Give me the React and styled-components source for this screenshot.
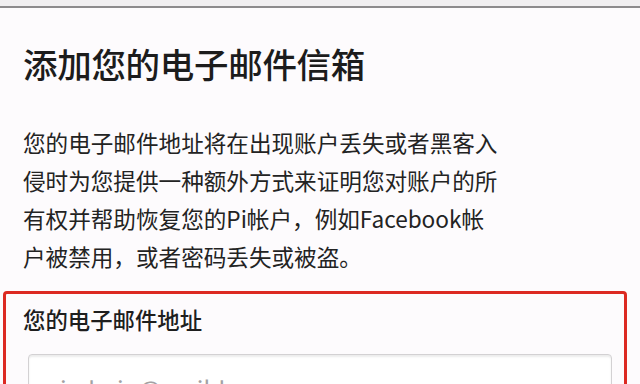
import React from "react";
import styled, { createGlobalStyle } from "styled-components";

const Global = createGlobalStyle`
  html, body { margin: 0; padding: 0; background: #fdfbfd; }
  body { font-family: "Noto Sans CJK SC", "Noto Sans", sans-serif; color: #1e1e1e; }
`;

const Page = styled.div`
  width: 640px;
  height: 384px;
  overflow: hidden;
  background: #fdfbfd;
  display: flex;
  flex-direction: column;
`;

const TopBar = styled.div`
  height: 6px;
  flex: none;
  background: #f1eff1;
  border-bottom: 2px solid #8d8b8d;
`;

const Content = styled.div`
  padding: 31px 0 0 23px;
  display: flex;
  flex-direction: column;
`;

const Title = styled.h1`
  margin: 0;
  font-size: 34.5px;
  line-height: 48px;
  font-weight: 500;
  color: #1c1c1c;
  letter-spacing: -0.3px;
`;

const Paragraph = styled.p`
  margin: 37px 0 0;
  font-size: 22.6px;
  line-height: 38px;
  font-weight: 400;
  color: #232323;
  white-space: nowrap;
`;

const FieldBox = styled.div`
  margin: 15px 0 0 -20px;
  width: 624px;
  box-sizing: border-box;
  border: 3px solid #dc2a22;
  border-radius: 4px;
  padding: 8px 12px 0 17px;
  display: flex;
  flex-direction: column;
`;

const Label = styled.div`
  font-size: 22.4px;
  line-height: 34px;
  font-weight: 500;
  color: #1e1e1e;
`;

const Input = styled.input`
  margin: 18px 0 0 5px;
  height: 68px;
  box-sizing: border-box;
  border: 1px solid #d3d1d3;
  border-radius: 4px;
  box-shadow: inset 0 2px 2px rgba(0, 0, 0, 0.08);
  background: #ffffff;
  padding: 0 16px;
  font-family: "Noto Sans CJK SC", "Noto Sans", sans-serif;
  font-size: 24px;
  color: #333;
  outline: none;
  &::placeholder { color: #a3a1a3; }
`;

export default function App() {
  return (
    <Page>
      <Global />
      <TopBar />
      <Content>
        <Title>添加您的电子邮件信箱</Title>
        <Paragraph>
          您的电子邮件地址将在出现账户丢失或者黑客入<br />
          侵时为您提供一种额外方式来证明您对账户的所<br />
          有权并帮助恢复您的Pi帐户，例如Facebook帐<br />
          户被禁用，或者密码丢失或被盗。
        </Paragraph>
        <FieldBox>
          <Label>您的电子邮件地址</Label>
          <Input placeholder="piadmin@maildrop.com" />
        </FieldBox>
      </Content>
    </Page>
  );
}
